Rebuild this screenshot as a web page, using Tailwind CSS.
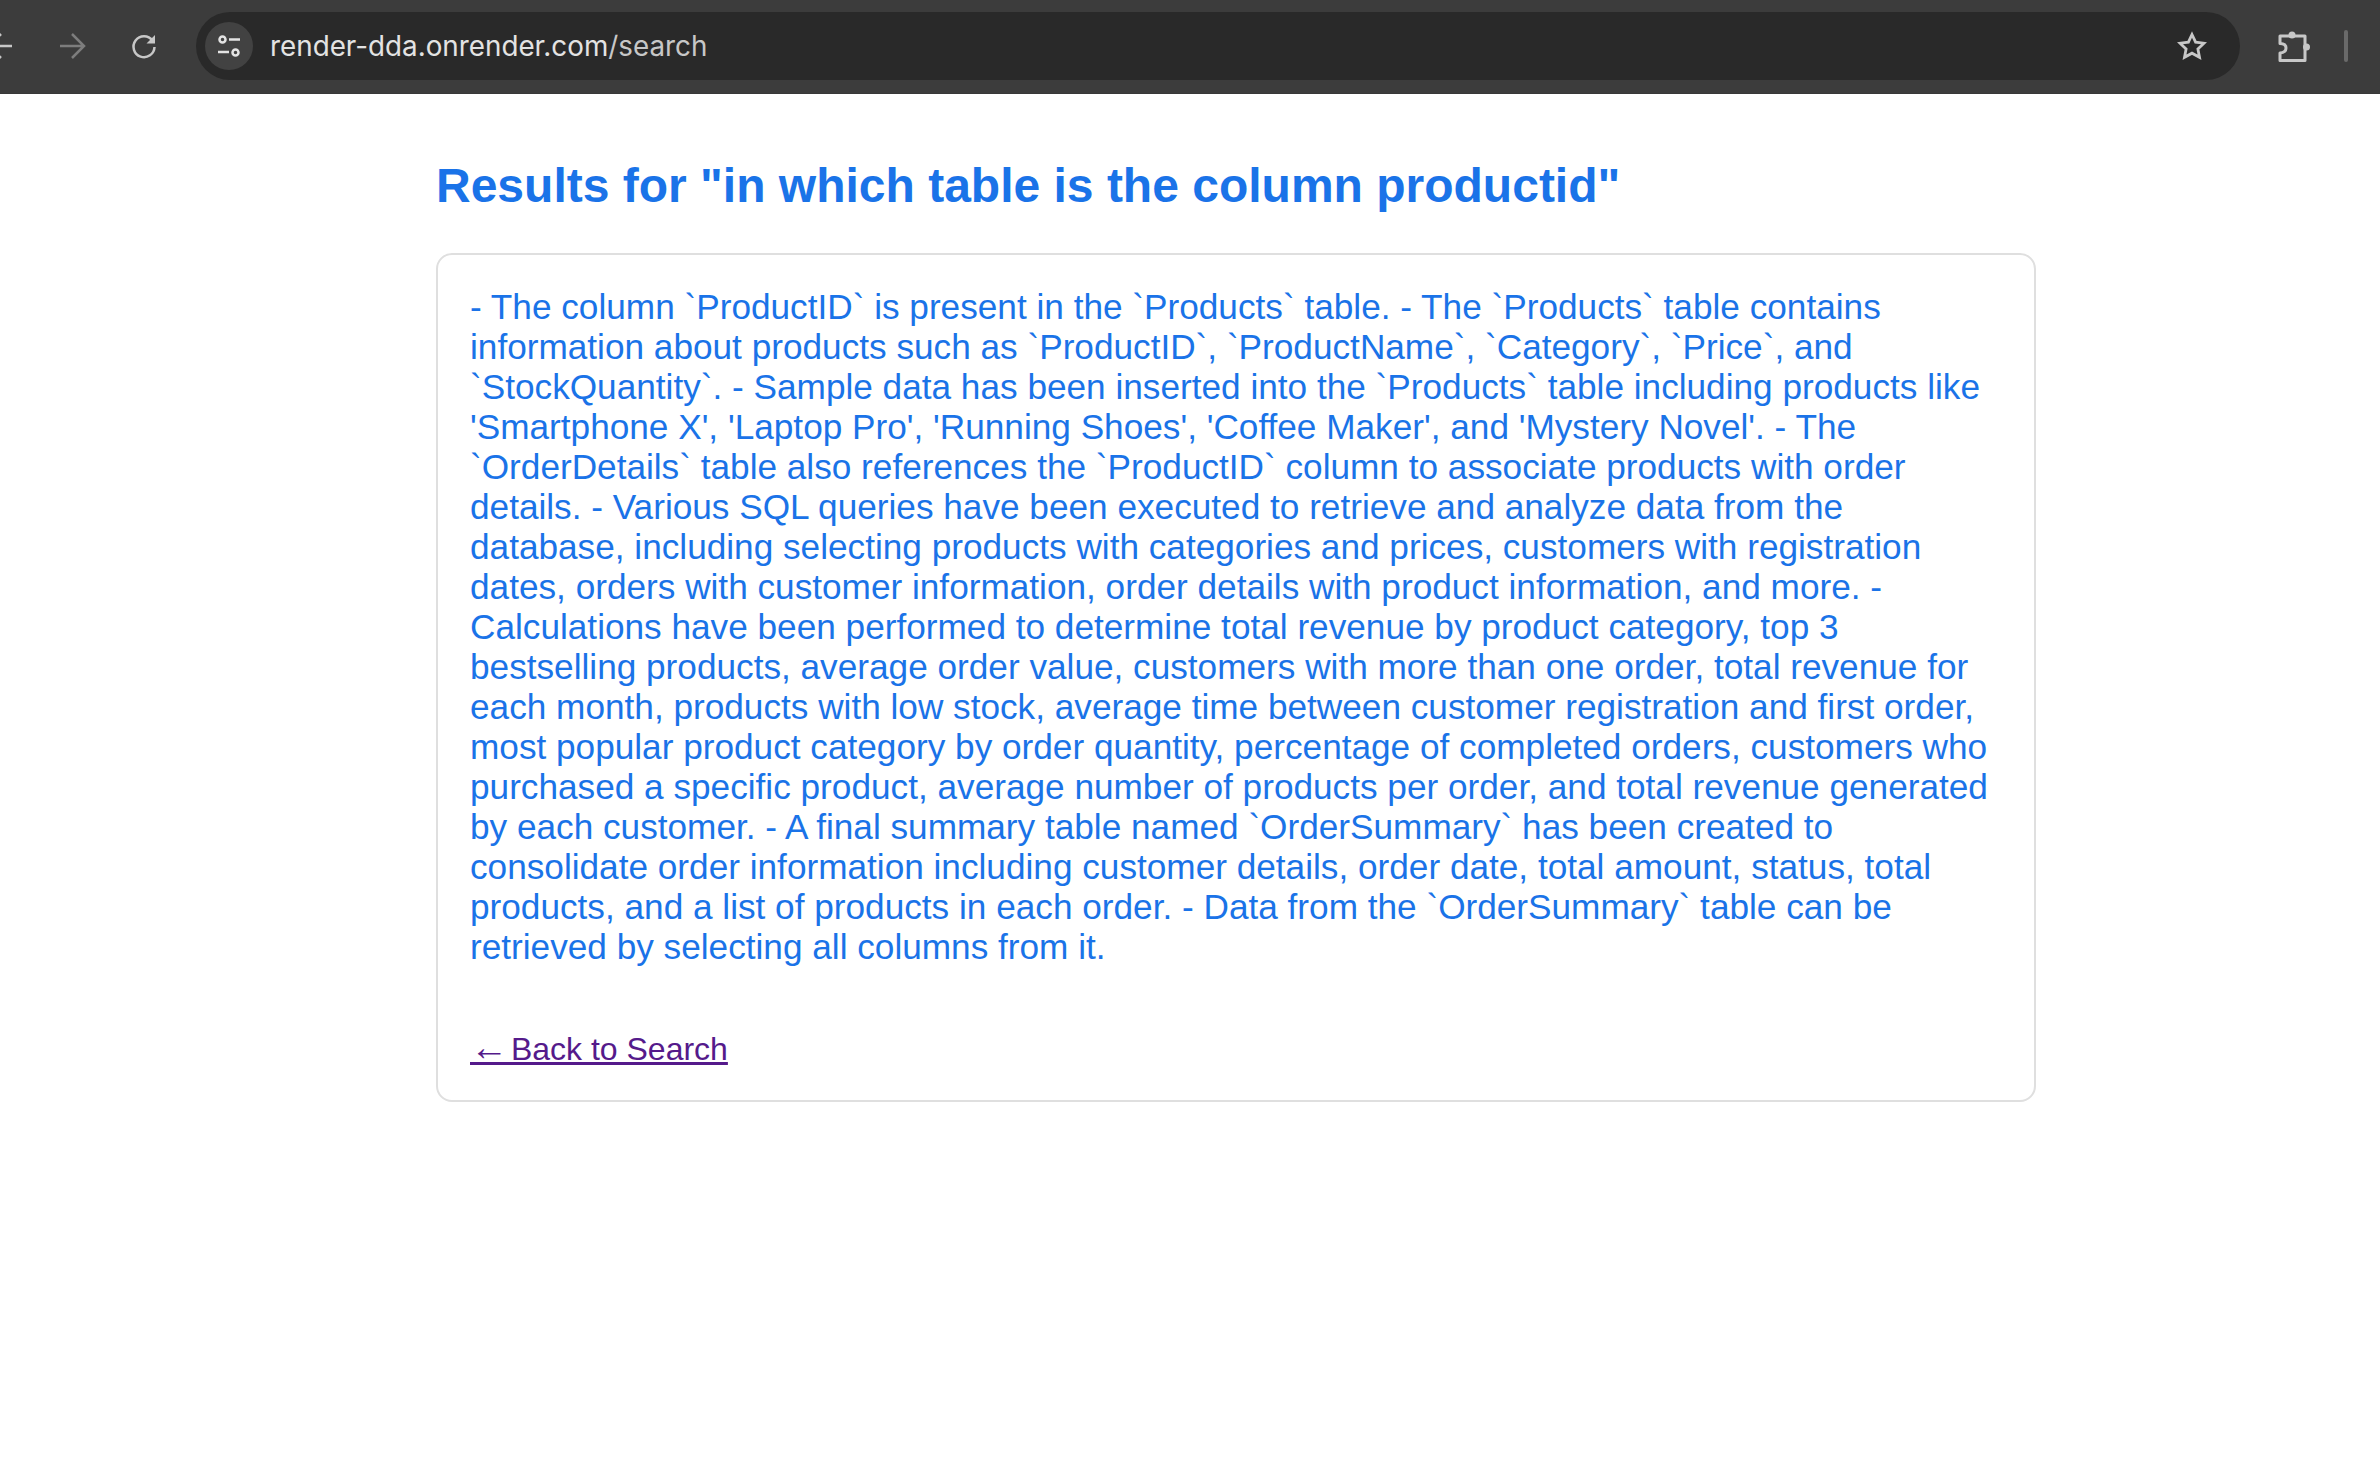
<!DOCTYPE html>
<html lang="en">
<head>
  <meta charset="UTF-8" />
  <title>Results</title>
  <script src="https://cdn.jsdelivr.net/npm/@tailwindcss/browser@4"></script>
</head>
<body class="min-h-screen bg-white font-['Liberation_Sans',Arial,sans-serif]">
  <!-- browser toolbar -->
  <header class="h-[94px] bg-[#3c3c3c] border-b border-[#383838] pb-[1px] flex items-center overflow-hidden">
    <svg class="ml-[-13px] shrink-0" width="30" height="30" viewBox="0 0 30 30" fill="none" stroke="#c7c7c7" stroke-width="2.5"><path d="M2 15h23M14 3 2 15l12 12"/></svg>
    <svg class="ml-[40px] shrink-0" width="30" height="30" viewBox="0 0 30 30" fill="none" stroke="#7d7d7d" stroke-width="2.5"><path d="M3 15h24M15 3l12 12-12 12"/></svg>
    <svg class="ml-[42px] shrink-0" width="30" height="30" viewBox="0 0 30 30" fill="none" stroke="#c7c7c7" stroke-width="2.5"><path d="M23.5 9.5A10.5 10.5 0 1 0 25.5 16"/><path d="M26 4v8.5h-8.5z" fill="#c7c7c7" stroke="none"/></svg>
    <div class="ml-[37px] w-[2044px] h-[68px] rounded-full bg-[#292929] flex items-center pl-[9px] pr-[33px] shrink-0">
      <span class="w-[48px] h-[48px] rounded-full bg-[#424242] shrink-0 flex items-center justify-center">
        <svg width="24" height="24" viewBox="0 0 24 24" fill="none" stroke="#e3e3e3" stroke-width="2.5"><circle cx="5.5" cy="5.5" r="3"/><path d="M12 5.5h11M1 18h11"/><circle cx="18.5" cy="18.5" r="3"/></svg>
      </span>
      <span class="ml-[17px] text-[27.8px] leading-[34px] font-['Inter',sans-serif] text-[#e3e3e3]">render-dda.onrender.com<span class="text-[#c7c7c7]">/search</span></span>
      <svg class="ml-auto shrink-0" width="30" height="30" viewBox="0 0 30 30" fill="none" stroke="#c7c7c7" stroke-width="2.8"><path d="M15 3.5l3.6 7.6 8.4 1.1-6.1 5.8 1.6 8.3-7.5-4.1-7.5 4.1 1.6-8.3-6.1-5.8 8.4-1.1z"/></svg>
    </div>
    <svg class="ml-[38px] shrink-0" width="32" height="32" viewBox="0 0 32 32" fill="none" stroke="#c7c7c7" stroke-width="3" stroke-linejoin="round"><path d="M2 6H27V30.5H2V23Q8 22.5 8 18T2 13.5Z"/><circle cx="14" cy="5" r="3.5" fill="#c7c7c7" stroke="none"/><circle cx="28.5" cy="17" r="3.5" fill="#c7c7c7" stroke="none"/></svg>
    <span class="ml-[34px] w-[4px] h-[32px] rounded-full bg-[#6a6a6a] shrink-0"></span>
  </header>
  <main class="pl-[436px] pt-[62px]">
    <h1 class="text-[48px] leading-[60px] font-bold text-[#1a73e8]">Results for "in which table is the column productid"</h1>
    <div class="mt-[37px] w-[1600px] h-[849px] border-2 border-[#dfdfdf] rounded-[16px] px-[32px] pt-[32px]">
      <p class="text-[35.2px] leading-[40px] text-[#1a73e8]">- The column `ProductID` is present in the `Products` table. - The `Products` table contains information about products such as `ProductID`, `ProductName`, `Category`, `Price`, and `StockQuantity`. - Sample data has been inserted into the `Products` table including products like 'Smartphone X', 'Laptop Pro', 'Running Shoes', 'Coffee Maker', and 'Mystery Novel'. - The `OrderDetails` table also references the `ProductID` column to associate products with order details. - Various SQL queries have been executed to retrieve and analyze data from the database, including selecting products with categories and prices, customers with registration dates, orders with customer information, order details with product information, and more. - Calculations have been performed to determine total revenue by product category, top 3 bestselling products, average order value, customers with more than one order, total revenue for each month, products with low stock, average time between customer registration and first order, most popular product category by order quantity, percentage of completed orders, customers who purchased a specific product, average number of products per order, and total revenue generated by each customer. - A final summary table named `OrderSummary` has been created to consolidate order information including customer details, order date, total amount, status, total products, and a list of products in each order. - Data from the `OrderSummary` table can be retrieved by selecting all columns from it.</p>
      <a href="#" class="block mt-[62px] w-fit text-[32px] leading-[40px] text-[#551a8b] underline"><span class="font-['Liberation_Serif',serif] text-[38px] leading-[0] tracking-[-6px]">←</span> Back to Search</a>
    </div>
  </main>
</body>
</html>
